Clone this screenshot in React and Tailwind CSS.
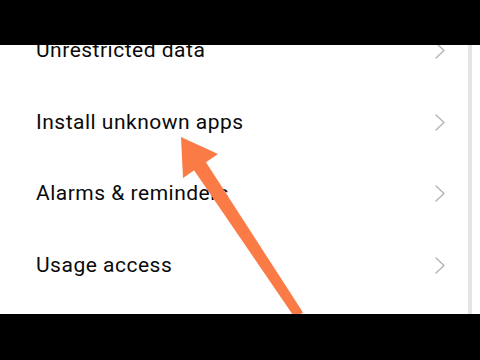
import React from 'react';

const items = ['Unrestricted data', 'Install unknown apps', 'Alarms & reminders', 'Usage access'];

const Chevron = () => (
  <svg width="10" height="17" viewBox="0 0 10 17" fill="none">
    <path d="M1 1 L9 8.5 L1 16" stroke="#b4b4b4" strokeWidth="1.4" strokeLinecap="round" strokeLinejoin="round" />
  </svg>
);

export default function App() {
  return (
    <div className="relative w-[480px] h-[360px] overflow-hidden bg-white flex flex-col" style={{ fontFamily: 'Roboto, "Noto Sans", sans-serif' }}>
      <div className="h-[45px] bg-black shrink-0 relative z-20" />

      <div className="flex flex-1 overflow-hidden">
        <div className="flex-1 -mt-[30px]">
          {items.map((label) => (
            <div key={label} className="h-[71.5px] flex items-center justify-between pl-[36px] pr-[23px]">
              <span className="text-[21px] text-[#0a0a0a] tracking-[0.5px]">{label}</span>
              <Chevron />
            </div>
          ))}
        </div>
        <div className="w-[4px] bg-[#e4e4e4]" />
        <div className="w-[8px]" />
      </div>

      <div className="h-[46px] bg-black shrink-0 relative z-20" />

      {/* annotation arrow */}
      <svg className="absolute inset-0 z-10 pointer-events-none" width="480" height="360" viewBox="0 0 480 360">
        <polygon points="181,137 218,154 183,178" fill="#fa7b46" />
        <polygon points="205.5,161.5 193.5,169.5 295,318 303,312.5" fill="#fa7b46" />
      </svg>
    </div>
  );
}
